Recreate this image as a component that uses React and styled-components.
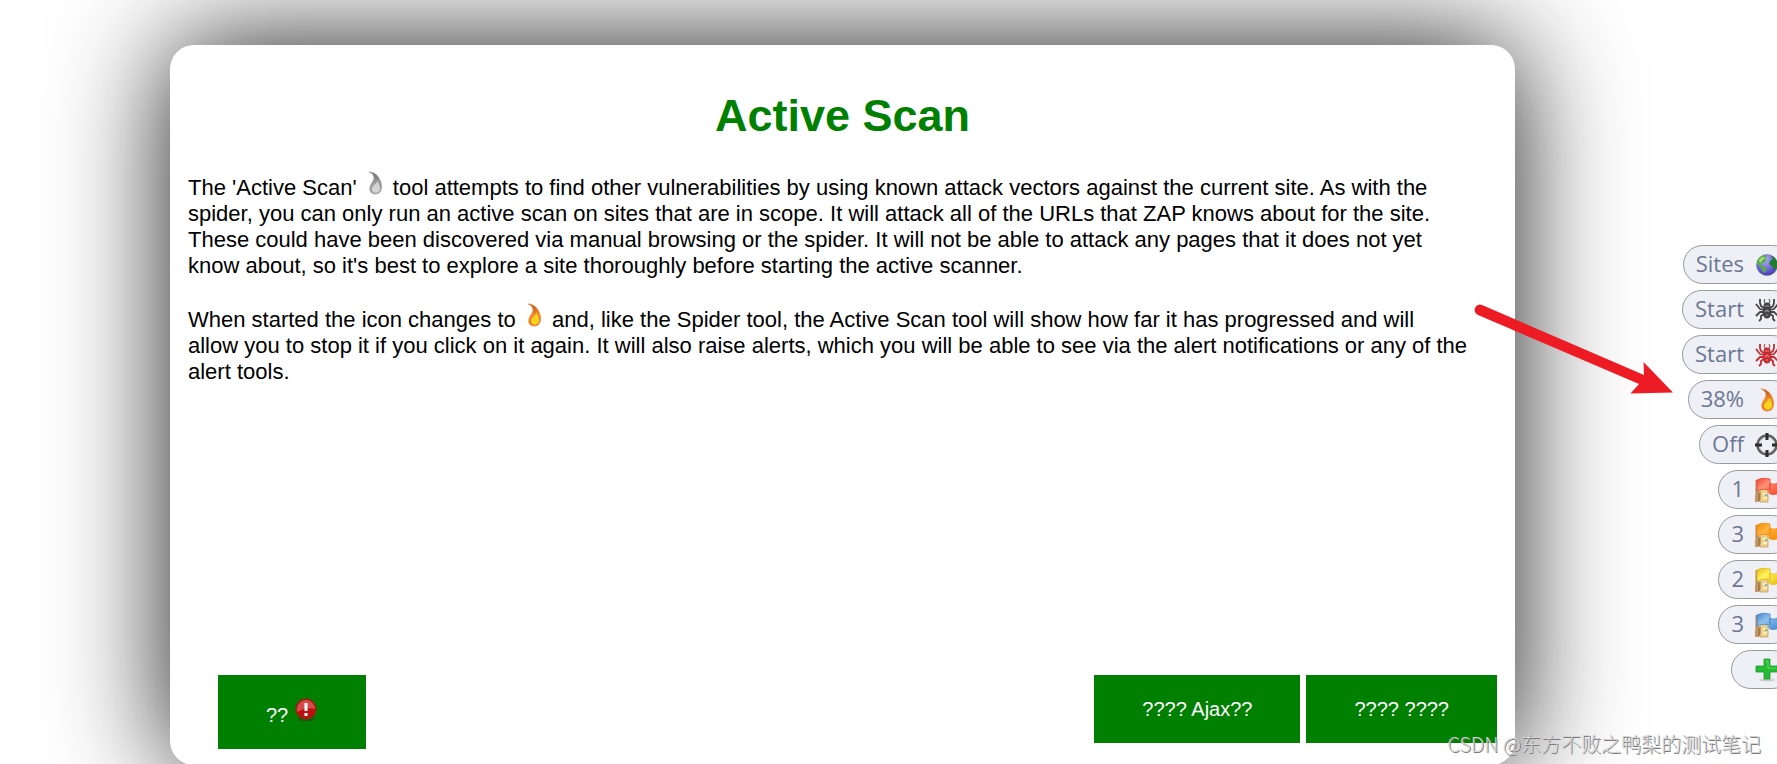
import styled, { createGlobalStyle } from "styled-components";

const GlobalStyle = createGlobalStyle`
  body {
    margin: 0;
    background: #fff;
    font-family: "Liberation Sans", Arial, sans-serif;
  }
`;

const Page = styled.div`
  position: relative;
  display: flex;
  height: 100vh;
  box-sizing: border-box;
  padding: 45px 0 0 170px;
  overflow: hidden;
`;

const Card = styled.main`
  flex: 1;
  display: flex;
  flex-direction: column;
  box-sizing: border-box;
  height: calc(100vh - 44px);
  padding: 41px 18px 16px;
  border-radius: 24px;
  background: #fff;
  box-shadow: 0 0 116px rgba(0, 0, 0, 0.9);
`;

const Title = styled.h1`
  margin: 0 0 27px;
  color: green;
  font-size: 45px;
  line-height: 60px;
  text-align: center;
`;

const Icon = styled.svg`
  width: 24px;
  height: 24px;
  flex: none;
  overflow: visible;
`;

const Text = styled.p`
  margin: 0 0 26px;
  color: #000;
  font-size: 22px;
  line-height: 26px;

  ${Icon} {
    margin-top: -2px;
  }
`;

const Actions = styled.div`
  display: flex;
  align-items: flex-start;
  gap: 6px;
  margin-top: auto;
  padding-left: 30px;
`;

const Button = styled.button`
  padding: 23px 48px 22px;
  border: 0;
  background: green;
  color: #fff;
  font-family: inherit;
  font-size: 20px;
  line-height: 23px;
  margin-right: ${(props) => (props.$first ? "auto" : "0")};
`;

const Hud = styled.aside`
  width: 262px;
  flex: none;
  padding-top: 200px;
`;

const Tools = styled.div`
  display: flex;
  flex-direction: column;
  align-items: flex-end;
  gap: 6px;
  margin-right: -15px;
`;

const Tool = styled.button`
  display: flex;
  align-items: center;
  gap: 11px;
  height: 39px;
  padding: 0 12px;
  border: 1px solid #999;
  border-radius: 20px;
  background: #eff0f5;
  color: #6b7794;
  font-family: "Open Sans", "Noto Sans", sans-serif;
  font-size: 22px;
  line-height: 30px;
`;

const Label = styled.span`
  padding-bottom: 3px;
`;

const Arrow = styled.svg`
  position: absolute;
  top: 300px;
  right: 100px;
  width: 207px;
  height: 100px;
`;

const Watermark = styled.div`
  position: absolute;
  right: 16px;
  bottom: 6px;
  color: #d4d4d4;
  font-family: "Noto Sans CJK SC", sans-serif;
  font-size: 20px;
  font-weight: 300;
  line-height: 28px;
  text-shadow: 1px 1px 0 #7c7c7c;
`;

const Flame = ({ id, colors }) => (
  <Icon viewBox="0 0 24 24" aria-hidden="true">
    <defs>
      <linearGradient id={id} x1="0" y1="0" x2="0" y2="1">
        <stop offset="0" stopColor={colors[0]} />
        <stop offset="0.5" stopColor={colors[1]} />
        <stop offset="1" stopColor={colors[2]} />
      </linearGradient>
    </defs>
    <path
      d="M6 1C11 1 15 4 17 9C19 13 19 17 18 19C17 22 15 23 12 23C8 23 6 20 7 16C8 12 11 10 11 7C11 4 9 2 6 1Z"
      fill={`url(#${id})`}
      stroke={colors[3]}
      strokeWidth="0.8"
    />
    <path d="M14 9C15 13 9 14 9 18C9 23 16 23 17 18C17 14 15 12 14 9Z" fill={colors[4]} />
  </Icon>
);

const hot = ["#b94720", "#ef922b", "#f36a1c", "#f0924b", "#ffd51c"];
const cold = ["#686868", "#9c9c9c", "#a6a6a6", "#a4a4a4", "#d5d5d5"];

const Globe = () => (
  <Icon viewBox="0 0 24 24" aria-hidden="true">
    <defs>
      <radialGradient id="sea" cx="0.4" cy="0.25" r="0.9">
        <stop offset="0" stopColor="#b4b2f8" />
        <stop offset="0.6" stopColor="#625ad0" />
        <stop offset="1" stopColor="#332c8c" />
      </radialGradient>
    </defs>
    <circle cx="12" cy="12" r="10.5" fill="url(#sea)" stroke="#6b68a4" strokeWidth="0.6" />
    <path d="M2 8L5 4L9 2L12 3L10 6L12 7L9 10L7 10L6 12L10 14L12 17L9 20L7 17L5 13L2 11Z" fill="#58ad45" />
    <path d="M16 3L19 4L22 8L22 14L19 17L17 13L14 11L15 8L18 6Z" fill="#217c2c" />
    <path d="M4 7L7 4L10 4L8 7L5 10Z" fill="#a2dc7a" />
  </Icon>
);

const Spider = ({ color, light }) => (
  <Icon viewBox="0 0 24 24" aria-hidden="true">
    <g fill="none" stroke={color} strokeWidth="1.8" strokeLinejoin="round">
      <path d="M10 11L6 8L5 5L5 1M9 12L5 11L1 6M9 14L5 14L1 18M10 15L6 18L6 21L4 23" />
      <path d="M14 11L18 8L19 5L19 1M15 12L19 11L23 6M15 14L19 14L23 18M14 15L18 18L18 21L20 23" />
      <path d="M11 7L9 3L10 1M13 7L15 3L14 1" strokeWidth="1" />
    </g>
    <ellipse cx="12" cy="8" rx="3.5" ry="3.5" fill={color} />
    <ellipse cx="12" cy="15" rx="4.2" ry="5.5" fill={color} />
    <path d="M10 8H14M10 14L12 12L14 14M11 17H13" stroke={light} strokeWidth="1.2" fill="none" />
  </Icon>
);

const Target = () => (
  <Icon viewBox="0 0 24 24" aria-hidden="true">
    <circle cx="12" cy="12" r="9.5" fill="none" stroke="#606060" strokeWidth="2.5" />
    <circle cx="12" cy="12" r="7.8" fill="none" stroke="#c3c3c7" strokeWidth="1" />
    <path d="M12 0V7M12 17V24M0 12H7M17 12H24" stroke="#2d2d2d" strokeWidth="3" />
  </Icon>
);

const Flag = ({ id, color, light }) => (
  <Icon viewBox="0 0 24 24" aria-hidden="true">
    <defs>
      <linearGradient id={id} x1="0" y1="0" x2="1" y2="1">
        <stop offset="0" stopColor={color} />
        <stop offset="0.4" stopColor={light} />
        <stop offset="1" stopColor={color} />
      </linearGradient>
    </defs>
    <path d="M5 11H13V24H5Z" fill="#edd18b" stroke="#b89656" strokeWidth="0.7" />
    <path d="M8 16H12M8 20H12" stroke="#fff0bd" strokeWidth="2" />
    <path d="M10 17H12" stroke="#55a9ad" strokeWidth="1.5" />
    <path d="M2 2V23" stroke="#b98959" strokeWidth="3" />
    <path d="M0 18L3 13L6 14V20L4 24H0Z" fill="#c69866" />
    <path d="M4 15V23" stroke="#89613d" strokeWidth="1" />
    <path
      d="M2 2C6 0 10 0 15 1V5C18 7 21 6 24 4V15C20 17 16 17 14 15V12C10 11 6 11 2 13Z"
      fill={`url(#${id})`}
      stroke={color}
      strokeWidth="0.8"
    />
    <path d="M15 5V12" stroke={color} strokeWidth="1.2" />
  </Icon>
);

const Plus = () => (
  <Icon viewBox="0 0 24 24" aria-hidden="true">
    <ellipse cx="12" cy="22" rx="8" ry="1.5" fill="#c9cacc" />
    <path
      d="M9 1H15V8H23V14H15V21H9V14H1V8H9Z"
      fill="#26ba35"
      stroke="#159b29"
      strokeWidth="0.8"
      strokeLinejoin="round"
    />
    <path d="M10 3H13V10H21" fill="none" stroke="#61da63" strokeWidth="1" />
  </Icon>
);

const Alert = () => (
  <Icon viewBox="0 0 24 24" aria-hidden="true">
    <ellipse cx="12" cy="21" rx="8" ry="2.5" fill="#175a0b" />
    <circle cx="12" cy="11" r="10" fill="#bc1010" stroke="#8a2a12" strokeWidth="1.4" />
    <path d="M3 11A9 9 0 0 1 21 11C15 9 9 11 3 14Z" fill="#d64a48" />
    <path d="M12 5V13M12 15V18" stroke="#fff" strokeWidth="3" />
  </Icon>
);

const tools = [
  { name: "Sites", text: "Sites", icon: <Globe /> },
  { name: "Spider", text: "Start", icon: <Spider color="#444" light="#999" /> },
  { name: "Ajax spider", text: "Start", icon: <Spider color="#c52e32" light="#f18180" /> },
  { name: "Active scan", text: "38%", icon: <Flame id="scan" colors={hot} /> },
  { name: "Attack mode", text: "Off", icon: <Target /> },
  { name: "High alerts", text: "1", icon: <Flag id="high" color="#ef442d" light="#ff9278" /> },
  { name: "Medium alerts", text: "3", icon: <Flag id="medium" color="#f38a04" light="#ffb441" /> },
  { name: "Low alerts", text: "2", icon: <Flag id="low" color="#e5b914" light="#fff45e" /> },
  { name: "Info alerts", text: "3", icon: <Flag id="info" color="#4387cc" light="#8fc0ed" /> },
  { name: "Add tool", text: "", icon: <Plus /> },
];

const App = () => {
  return (
    <Page>
      <GlobalStyle />
      <Card>
        <Title>Active Scan</Title>
        <Text>
          The 'Active Scan' <Flame id="idle" colors={cold} /> tool attempts to find other
          vulnerabilities by using known attack vectors against the current site. As with the
          <br />
          spider, you can only run an active scan on sites that are in scope. It will attack all of
          the URLs that ZAP knows about for the site.
          <br />
          These could have been discovered via manual browsing or the spider. It will not be able to
          attack any pages that it does not yet
          <br />
          know about, so it's best to explore a site thoroughly before starting the active scanner.
        </Text>
        <Text>
          When started the icon changes to <Flame id="running" colors={hot} /> and, like the Spider
          tool, the Active Scan tool will show how far it has progressed and will
          <br />
          allow you to stop it if you click on it again. It will also raise alerts, which you will be
          able to see via the alert notifications or any of the
          <br />
          alert tools.
        </Text>
        <Actions>
          <Button $first>
            ?? <Alert />
          </Button>
          <Button>???? Ajax??</Button>
          <Button>???? ????</Button>
        </Actions>
      </Card>
      <Hud>
        <Tools>
          {tools.map((tool) => (
            <Tool key={tool.name} title={tool.name}>
              <Label>{tool.text}</Label>
              {tool.icon}
            </Tool>
          ))}
        </Tools>
      </Hud>
      <Arrow viewBox="0 0 207 100" aria-hidden="true">
        <path
          d="M12 5L174 75L173.500 62L203 92.500L160.500 93.500L169 84L8 15A5 5 0 0 1 12 5Z"
          fill="#ed1c24"
        />
      </Arrow>
      <Watermark>CSDN @东方不败之鸭梨的测试笔记</Watermark>
    </Page>
  );
};

export default App;
